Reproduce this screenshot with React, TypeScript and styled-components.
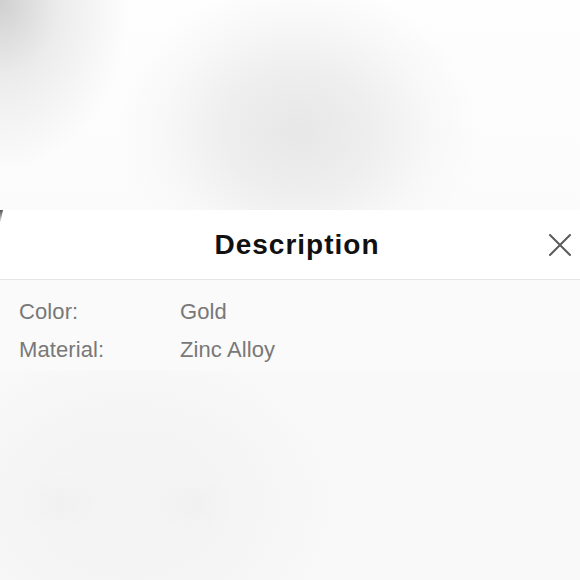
import styled, { createGlobalStyle } from 'styled-components'

const GlobalStyle = createGlobalStyle`
  html, body {
    margin: 0;
    padding: 0;
    background: #ffffff;
  }
  * {
    box-sizing: border-box;
  }
`

const Page = styled.div`
  width: 580px;
  height: 580px;
  display: flex;
  flex-direction: column;
  overflow: hidden;
  font-family: 'Liberation Sans', Arial, sans-serif;
`

const TopBackdrop = styled.div`
  height: 210px;
  flex-shrink: 0;
  background:
    radial-gradient(ellipse 130px 170px at 0px 0px, #cfcfcf 0%, rgba(228, 228, 228, 0.7) 45%, rgba(255, 255, 255, 0) 100%),
    radial-gradient(ellipse 180px 150px at 298px 132px, #e7e7e7 0%, #eeeeee 40%, #f8f8f8 75%, rgba(252, 252, 252, 0) 100%),
    linear-gradient(#fefefe, #fbfbfb);
`

const Sheet = styled.section`
  display: flex;
  flex-direction: column;
`

const Header = styled.header`
  position: relative;
  height: 70px;
  background: #ffffff;
  border-bottom: 1px solid #e4e4e4;
  display: grid;
  grid-template-columns: 60px 1fr 60px;
  align-items: center;
  padding-left: 14px;

  &::before {
    content: '';
    position: absolute;
    left: 0;
    top: 0;
    width: 3px;
    height: 12px;
    background: linear-gradient(#555, rgba(120, 120, 120, 0.2));
    transform: skewX(-12deg);
    transform-origin: top left;
  }
`

const Title = styled.h2`
  grid-column: 2;
  margin: 0;
  text-align: center;
  font-family: 'Liberation Sans', Arial, sans-serif;
  font-size: 28px;
  font-weight: 700;
  letter-spacing: 1px;
  color: #111111;
`

const CloseButton = styled.button`
  grid-column: 3;
  justify-self: end;
  margin-right: 8px;
  width: 24px;
  height: 24px;
  padding: 0;
  border: none;
  background: none;
  display: flex;
  align-items: center;
  justify-content: center;
  color: #5a5a5a;
`

const Body = styled.div`
  height: 91px;
  background: #fafafa;
  padding: 19px 19px 0;
  display: flex;
  flex-direction: column;
  gap: 13px;
`

const Row = styled.div`
  display: grid;
  grid-template-columns: 161px 1fr;
  font-size: 22px;
  line-height: 25px;
  letter-spacing: 0.1px;
  color: #787878;
`

const Label = styled.span``

const Value = styled.span``

const BottomBackdrop = styled.div`
  flex: 1;
  background:
    radial-gradient(ellipse 40px 30px at 60px 133px, #f1f1f1 0%, rgba(243, 243, 243, 0) 100%),
    radial-gradient(ellipse 40px 30px at 195px 133px, #f1f1f1 0%, rgba(243, 243, 243, 0) 100%),
    radial-gradient(ellipse 210px 160px at 130px 133px, #f3f3f3 0%, #f5f5f5 60%, rgba(248, 248, 248, 0) 100%),
    #f9f9f9;
`

const details = [
  { label: 'Color:', value: 'Gold' },
  { label: 'Material:', value: 'Zinc Alloy' },
]

export default function App() {
  return (
    <>
      <GlobalStyle />
      <Page>
        <TopBackdrop />
        <Sheet>
          <Header>
            <Title>Description</Title>
            <CloseButton aria-label="Close">
              <svg width="24" height="24" viewBox="0 0 24 24">
                <path d="M2 2 L22 22 M22 2 L2 22" stroke="currentColor" strokeWidth="2" strokeLinecap="round" />
              </svg>
            </CloseButton>
          </Header>
          <Body>
            {details.map((d) => (
              <Row key={d.label}>
                <Label>{d.label}</Label>
                <Value>{d.value}</Value>
              </Row>
            ))}
          </Body>
        </Sheet>
        <BottomBackdrop />
      </Page>
    </>
  )
}
